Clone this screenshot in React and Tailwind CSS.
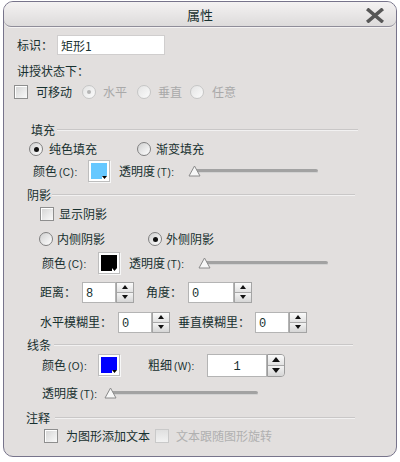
import React from "react";

const ink = "text-[#17302f]";

function Check({ disabled }) {
    return (
        <span
            className={
                disabled
                    ? "block w-[14px] h-[14px] shrink-0 border border-[#c9c9c9] bg-gradient-to-b from-[#e0e0e0] to-[#f2f2f2]"
                    : "block w-[14px] h-[14px] shrink-0 border border-[#8e8e8e] bg-gradient-to-br from-[#d4d4d4] to-[#fafafa] shadow-[inset_1px_1px_0_#ffffff]"
            }
        />
    );
}

function Radio({ checked, disabled }) {
    return (
        <span
            className={
                disabled
                    ? "flex items-center justify-center w-[14px] h-[14px] shrink-0 rounded-full border border-[#c6c6c6] bg-gradient-to-br from-[#e4e4e4] to-[#fbfbfb]"
                    : "flex items-center justify-center w-[14px] h-[14px] shrink-0 rounded-full border border-[#808080] bg-gradient-to-br from-[#d0d0d0] to-[#ffffff]"
            }
        >
            {checked && (
                <span
                    className={
                        disabled
                            ? "block w-[4px] h-[4px] rounded-full bg-[#b5b5b5]"
                            : "block w-[5px] h-[5px] rounded-full bg-[#111111]"
                    }
                />
            )}
        </span>
    );
}

function Swatch({ fill }) {
    return (
        <span className="relative block w-[22px] h-[22px] shrink-0 border border-[#bdbdbd] bg-white p-[2px] shadow-[1px_1px_0_#f7f7f7]">
            <span className={`block w-full h-full ${fill}`} />
            <span className="absolute right-[2px] bottom-[2px] w-[5px] h-[3px] bg-white">
                <svg width="5" height="3" viewBox="0 0 5 3" className="block">
                    <path d="M0 0 H5 L2.5 3 Z" fill="#000" />
                </svg>
            </span>
        </span>
    );
}

function Arrow({ up, big }) {
    const w = big ? 8 : 6;
    const h = big ? 5 : 4;
    return (
        <svg width={w} height={h} viewBox={`0 0 ${w} ${h}`} className="block">
            <path d={up ? `M0 ${h} L${w / 2} 0 L${w} ${h} Z` : `M0 0 L${w} 0 L${w / 2} ${h} Z`} fill="#111" />
        </svg>
    );
}

function Spinner({ inputW, value, big }) {
    return (
        <div className={big ? "flex h-[23px] shrink-0" : "flex h-[21px] shrink-0"}>
            <div
                className={`${inputW} h-full bg-white border border-[#b4b4b4] flex items-end ${
                    big ? "justify-center pb-[3px]" : "pl-[3px] pb-[2px]"
                } font-['Liberation_Mono',monospace] text-[12px] leading-none ${ink}`}
            >
                {value}
            </div>
            <div
                className={
                    big
                        ? "w-[18px] h-full flex flex-col border border-[#9c9c9c] rounded-r-[4px] overflow-hidden"
                        : "w-[18px] h-full flex flex-col border border-[#a4a4a4]"
                }
            >
                <div className="flex-1 flex items-center justify-center bg-gradient-to-b from-[#fbfbfb] to-[#e2e2e2] border-b border-[#a8a8a8]">
                    <Arrow up big={big} />
                </div>
                <div className="flex-1 flex items-center justify-center bg-gradient-to-b from-[#f3f3f3] to-[#d6d6d6]">
                    <Arrow big={big} />
                </div>
            </div>
        </div>
    );
}

function Slider({ w }) {
    return (
        <div className={`relative ${w} h-[14px] shrink-0`}>
            <div className="absolute left-[4px] right-0 top-[5px] h-[4px] rounded-full bg-[#a2a2a2] border-b border-[#d2d2d2]" />
            <svg width="13" height="12" viewBox="0 0 13 12" className="absolute left-0 top-[1px]">
                <path d="M6.5 1 L12 11 H1 Z" fill="#f7f7f7" stroke="#8a8a8a" strokeWidth="1" />
            </svg>
        </div>
    );
}

function Paren({ children }) {
    return <span className="ml-[2px] font-['Liberation_Sans',sans-serif] text-[10px] tracking-[0.5px]">{children}</span>;
}

function Group({ title, pl, lineMl, lineW, mt }) {
    return (
        <div className={`flex h-[18px] items-center ${pl} ${mt}`}>
            <span>{title}</span>
            <span className={`${lineMl} ${lineW} h-[2px] border-t border-[#c9c7c7] border-b border-b-[#f2f1f1]`} />
        </div>
    );
}

export default function App() {
    return (
        <div className={`w-[400px] h-[462px] bg-white pt-[1px] pl-[3px] font-['Noto_Sans_CJK_SC',sans-serif] text-[12px] leading-none ${ink}`}>
            <div className="w-[394px] h-[456px] border border-[#77748b] rounded-[10px] bg-[#e2dfde] overflow-hidden">
                {/* title bar */}
                <div className="relative h-[25px] flex items-center justify-center border-b border-[#8f8d99] rounded-b-[7px] bg-gradient-to-b from-[#f4f2f2] to-[#dddbdb] shadow-[0_1px_0_#f4f2f2]">
                    <span className="text-[13px]">属性</span>
                    <svg width="18" height="15" viewBox="0 0 18 15" className="absolute right-[12px] top-[6px]">
                        <path d="M2.5 2 L15.5 13 M15.5 2 L2.5 13" stroke="#575757" strokeWidth="3.6" strokeLinecap="square" />
                    </svg>
                </div>

                {/* 标识 */}
                <div className="flex h-[18px] items-center pl-[13px] mt-[9px]">
                    <span className="w-[40px]">标识：</span>
                    <div className="w-[108px] h-[20px] shrink-0 bg-white border border-[#d0cece] flex items-end pl-[3px] pb-[2px]">
                        矩形1
                    </div>
                </div>

                <div className="flex h-[18px] items-center pl-[13px] mt-[8px]">讲授状态下：</div>

                <div className="flex h-[18px] items-center pl-[10px] mt-[3px]">
                    <Check />
                    <span className="ml-[8px]">可移动</span>
                    <span className="ml-[10px]"><Radio checked disabled /></span>
                    <span className="ml-[7px] text-[#a9a9a9]">水平</span>
                    <span className="ml-[10px]"><Radio disabled /></span>
                    <span className="ml-[7px] text-[#a9a9a9]">垂直</span>
                    <span className="ml-[8px]"><Radio disabled /></span>
                    <span className="ml-[8px] text-[#a9a9a9]">任意</span>
                </div>

                {/* 填充 */}
                <Group title="填充" pl="pl-[27px]" lineMl="ml-[2px]" lineW="w-[301px]" mt="mt-[20px]" />

                <div className="flex h-[18px] items-center pl-[25px] mt-[1px]">
                    <Radio checked />
                    <span className="ml-[6px] w-[48px]">纯色填充</span>
                    <span className="ml-[40px]"><Radio /></span>
                    <span className="ml-[5px]">渐变填充</span>
                </div>

                <div className="flex h-[18px] items-center pl-[29px] mt-[4px]">
                    <span className="w-[55px] shrink-0">颜色<Paren>(C):</Paren></span>
                    <Swatch fill="bg-[#66c8ff]" />
                    <span className="ml-[9px] w-[69px] shrink-0">透明度<Paren>(T):</Paren></span>
                    <Slider w="w-[130px]" />
                </div>

                {/* 阴影 */}
                <Group title="阴影" pl="pl-[23px]" lineMl="ml-[1px]" lineW="w-[303px]" mt="mt-[6px]" />

                <div className="flex h-[18px] items-center pl-[36px] mt-[1px]">
                    <Check />
                    <span className="ml-[5px]">显示阴影</span>
                </div>

                <div className="flex h-[18px] items-center pl-[35px] mt-[7px]">
                    <Radio />
                    <span className="ml-[4px] w-[48px]">内侧阴影</span>
                    <span className="ml-[43px]"><Radio checked /></span>
                    <span className="ml-[4px]">外侧阴影</span>
                </div>

                <div className="flex h-[18px] items-center pl-[38px] mt-[6px]">
                    <span className="w-[56px] shrink-0">颜色<Paren>(C):</Paren></span>
                    <Swatch fill="bg-black" />
                    <span className="ml-[9px] w-[69px] shrink-0">透明度<Paren>(T):</Paren></span>
                    <Slider w="w-[130px]" />
                </div>

                <div className="flex h-[18px] items-center pl-[36px] mt-[11px]">
                    <span className="w-[42px] shrink-0">距离：</span>
                    <Spinner inputW="w-[34px]" value="8" />
                    <span className="ml-[12px] w-[42px] shrink-0">角度：</span>
                    <Spinner inputW="w-[46px]" value="0" />
                </div>

                <div className="flex h-[18px] items-center pl-[36px] mt-[12px]">
                    <span className="w-[78px] shrink-0">水平模糊里：</span>
                    <Spinner inputW="w-[34px]" value="0" />
                    <span className="ml-[8px] w-[77px] shrink-0">垂直模糊里：</span>
                    <Spinner inputW="w-[34px]" value="0" />
                </div>

                {/* 线条 */}
                <Group title="线条" pl="pl-[23px]" lineMl="ml-[3px]" lineW="w-[299px]" mt="mt-[5px]" />

                <div className="flex h-[18px] items-center pl-[38px] mt-[2px]">
                    <span className="w-[56px] shrink-0">颜色<Paren>(O):</Paren></span>
                    <Swatch fill="bg-[#0000ff]" />
                    <span className="ml-[28px] w-[59px] shrink-0">粗细<Paren>(W):</Paren></span>
                    <Spinner inputW="w-[60px]" value="1" big />
                </div>

                <div className="flex h-[18px] items-center pl-[38px] mt-[10px]">
                    <span className="w-[62px] shrink-0">透明度<Paren>(T):</Paren></span>
                    <Slider w="w-[154px]" />
                </div>

                {/* 注释 */}
                <Group title="注释" pl="pl-[22px]" lineMl="ml-[5px]" lineW="w-[300px]" mt="mt-[7px]" />

                <div className="flex h-[18px] items-center pl-[40px] mt-[0px]">
                    <Check />
                    <span className="ml-[8px] w-[84px] shrink-0">为图形添加文本</span>
                    <span className="ml-[5px]"><Check disabled /></span>
                    <span className="ml-[7px] text-[#b0b0b0]">文本跟随图形旋转</span>
                </div>
            </div>
        </div>
    );
}
